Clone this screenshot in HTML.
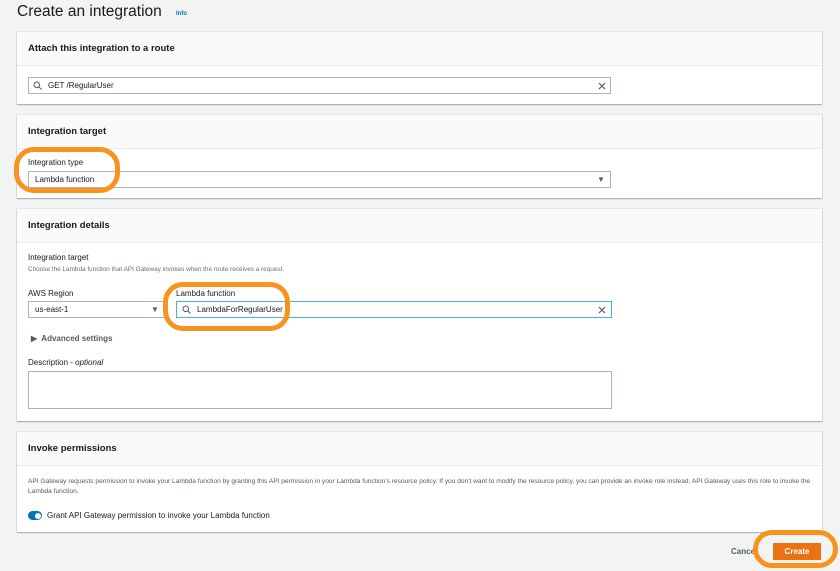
<!DOCTYPE html>
<html><head><meta charset="utf-8"><style>
*{box-sizing:border-box;margin:0;padding:0}
body{width:840px;height:571px;background:#f2f3f3;font-family:"Liberation Sans",sans-serif;color:#16191f;position:relative;overflow:hidden;font-size:8px}
.a{position:absolute}
.panel{position:absolute;left:17px;width:805px;background:#fff;box-shadow:0 1px 1px rgba(0,28,36,.3),0 0 0 1px #e4e6e6}
.hd{background:#fafafa;border-bottom:1px solid #eaeded;height:34px;padding-left:11px;font-weight:bold;font-size:9.5px;line-height:34px}
.inp{position:absolute;border:1px solid #aab7b8;background:#fff;height:17px;font-size:8px;line-height:15px;padding-left:6px}
.lbl{position:absolute;font-size:8px}
.ring{position:absolute;border:5px solid #f7931e;border-radius:20px}
</style></head><body>
<div class="a" style="left:17px;top:3px;font-size:15.5px">Create an integration</div>
<div class="a" style="left:176px;top:11px;font-size:6px;color:#0073bb;font-weight:bold">Info</div>

<div class="panel" style="top:32px;height:72px"><div class="hd">Attach this integration to a route</div>
<div class="inp" style="left:11px;top:45px;width:583px;padding-left:19px">GET /RegularUser</div>
<svg class="a" style="left:16px;top:49px" width="9" height="9"><circle cx="3.8" cy="3.8" r="2.8" fill="none" stroke="#545b64" stroke-width="1"/><path d="M6 6l2.5 2.5" stroke="#545b64"/></svg>
<svg class="a" style="left:581px;top:50px" width="8" height="8"><path d="M1 1l6 6M7 1l-6 6" stroke="#545b64" stroke-width="1.2"/></svg>
</div>

<div class="panel" style="top:115px;height:83px"><div class="hd">Integration target</div>
<div class="lbl" style="left:11px;top:43px">Integration type</div>
<div class="inp" style="left:11px;top:56px;width:583px">Lambda function</div>
<div class="a" style="left:580px;top:60px;font-size:8px;color:#545b64">▼</div>
</div>

<div class="panel" style="top:209px;height:212px"><div class="hd">Integration details</div>
<div class="lbl" style="left:11px;top:44px">Integration target</div>
<div class="lbl" style="left:11px;top:57px;font-size:6.4px;color:#687078">Choose the Lambda function that API Gateway invokes when the route receives a request.</div>
<div class="lbl" style="left:11px;top:80px">AWS Region</div>
<div class="inp" style="left:11px;top:92px;width:137px">us-east-1</div>
<div class="a" style="left:134px;top:96px;font-size:8px;color:#545b64">▼</div>
<div class="lbl" style="left:159px;top:80px">Lambda function</div>
<div class="inp" style="left:159px;top:92px;width:436px;border-color:#44b9d6;padding-left:20px">LambdaForRegularUser</div>
<svg class="a" style="left:165px;top:96px" width="9" height="9"><circle cx="3.8" cy="3.8" r="2.8" fill="none" stroke="#545b64" stroke-width="1"/><path d="M6 6l2.5 2.5" stroke="#545b64"/></svg>
<svg class="a" style="left:581px;top:97px" width="8" height="8"><path d="M1 1l6 6M7 1l-6 6" stroke="#545b64" stroke-width="1.2"/></svg>
<div class="lbl" style="left:14px;top:125px;font-weight:bold;color:#545b64">▶&nbsp; Advanced settings</div>
<div class="lbl" style="left:11px;top:149px">Description - <i>optional</i></div>
<div class="inp" style="left:11px;top:162px;width:584px;height:38px"></div>
</div>

<div class="panel" style="top:432px;height:100px"><div class="hd">Invoke permissions</div>
<div class="lbl" style="left:11px;top:45px;font-size:6.6px;color:#545b64;width:785px;line-height:9.5px">API Gateway requests permission to invoke your Lambda function by granting this API permission in your Lambda function's resource policy. If you don't want to modify the resource policy, you can provide an invoke role instead. API Gateway uses this role to invoke the Lambda function.</div>
<div class="a" style="left:11px;top:79px;width:14px;height:9px;border-radius:4.5px;background:#0073bb"><div class="a" style="left:7px;top:1.5px;width:6px;height:6px;border-radius:3px;background:#fff"></div></div>
<div class="lbl" style="left:30px;top:79px">Grant API Gateway permission to invoke your Lambda function</div>
</div>

<div class="a" style="left:731px;top:547px;font-weight:bold;color:#545b64">Cancel</div>
<div class="a" style="left:773px;top:543px;width:48px;height:17px;background:#ec7211;color:#fff;font-weight:bold;text-align:center;line-height:17px">Create</div>

<div class="ring" style="left:14px;top:147px;width:106px;height:46px"></div>
<div class="ring" style="left:163px;top:282px;width:127px;height:49px"></div>
<div class="ring" style="left:753px;top:530px;width:85px;height:38px"></div>
</body></html>
